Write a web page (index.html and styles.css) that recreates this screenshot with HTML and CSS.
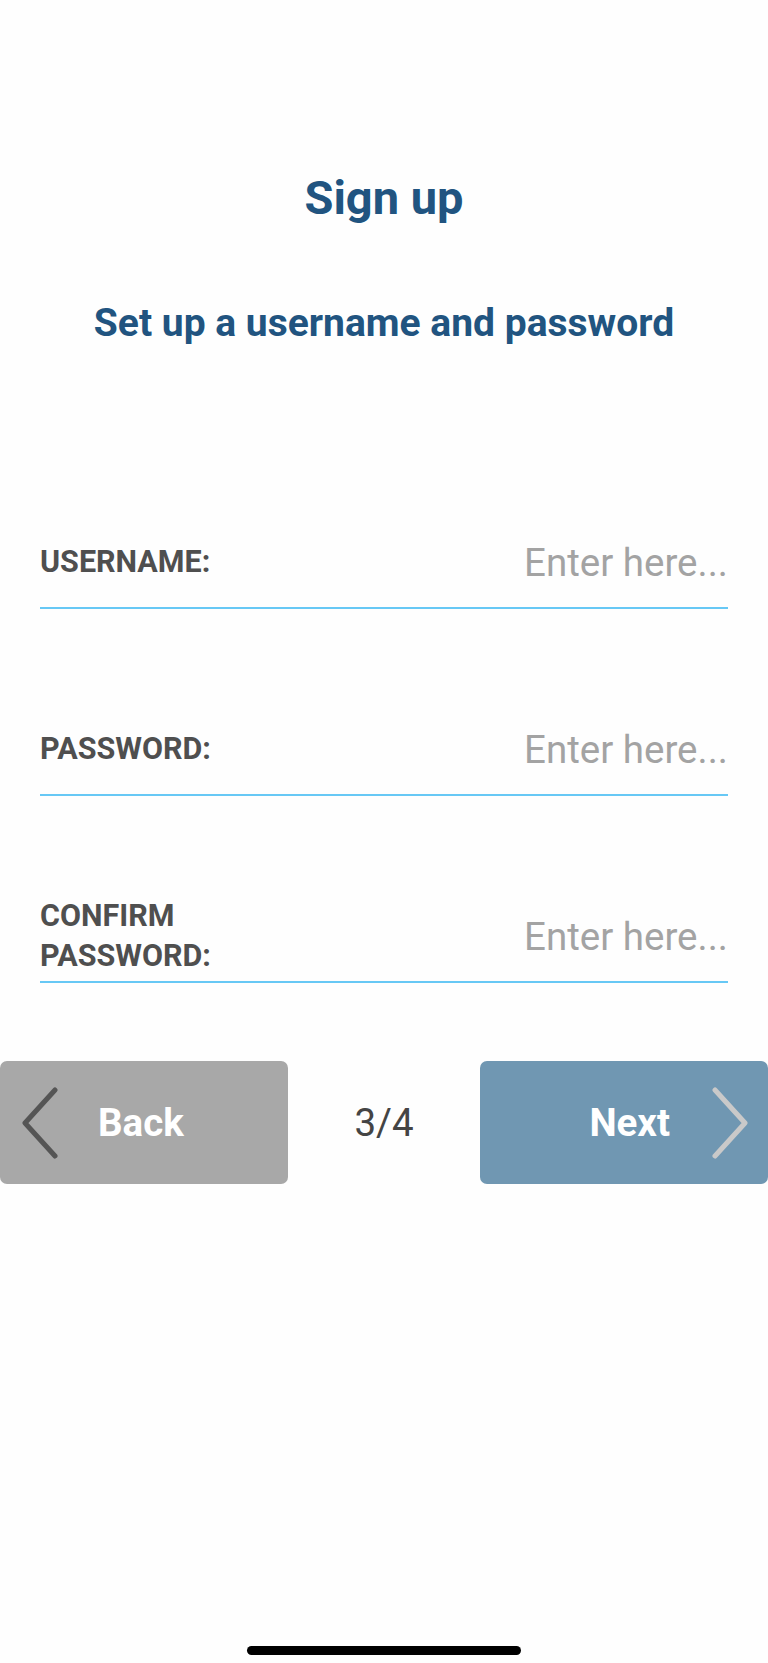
FILE: index.html
```html
<!DOCTYPE html>
<html lang="en">
<head>
    <meta charset="UTF-8">
    <meta name="viewport" content="width=device-width, initial-scale=1.0">
    <title>Sign up</title>
    <link rel="stylesheet" href="styles.css">
</head>
<body>
    <div class="page">
        <h1 class="title">Sign up</h1>
        <h2 class="subtitle">Set up a username and password</h2>

        <form class="signup-form">
            <div class="field-row">
                <label class="field-label" for="username">USERNAME:</label>
                <input class="field-input" id="username" type="text" placeholder="Enter here...">
            </div>
            <div class="field-row">
                <label class="field-label" for="password">PASSWORD:</label>
                <input class="field-input" id="password" type="password" placeholder="Enter here...">
            </div>
            <div class="field-row">
                <label class="field-label" for="confirm">CONFIRM<br>PASSWORD:</label>
                <input class="field-input" id="confirm" type="password" placeholder="Enter here...">
            </div>
        </form>

        <div class="nav-bar">
            <button class="nav-btn back-btn" type="button">
                <svg class="chevron" width="37" height="72" viewBox="0 0 37 72">
                    <polyline points="34,3 4,36 34,69" fill="none" stroke="#555555" stroke-width="5" stroke-linecap="round" stroke-linejoin="round"/>
                </svg>
                <span>Back</span>
            </button>
            <div class="step">3/4</div>
            <button class="nav-btn next-btn" type="button">
                <span>Next</span>
                <svg class="chevron" width="37" height="72" viewBox="0 0 37 72">
                    <polyline points="3,3 33,36 3,69" fill="none" stroke="#c9c9c9" stroke-width="5" stroke-linecap="round" stroke-linejoin="round"/>
                </svg>
            </button>
        </div>

        <div class="home-bar"></div>
    </div>
</body>
</html>
```

FILE: styles.css
```css
/* page */
body {
    margin: 0;
    padding: 0;
    background-color: #fefefe;
    font-family: Roboto, "Liberation Sans", sans-serif;
}
.page {
    min-height: 100vh;
    display: flex;
    flex-direction: column;
    padding-top: 168px;
    box-sizing: border-box;
}

/* headings */
.title {
    margin: 0;
    text-align: center;
    font-size: 47px;
    line-height: 59px;
    font-weight: 700;
    color: #215480;
}
.subtitle {
    margin: 73px 0 0;
    text-align: center;
    font-size: 39px;
    line-height: 46px;
    font-weight: 700;
    color: #215480;
}

/* form rows */
.signup-form {
    margin-top: 171px;
    padding: 0 40px;
    display: flex;
    flex-direction: column;
    gap: 95px;
}
.field-row {
    height: 90px;
    display: flex;
    align-items: center;
    justify-content: space-between;
    border-bottom: 2px solid #67c8f5;
}
.field-label {
    font-size: 30.5px;
    line-height: 40px;
    font-weight: 700;
    color: #4f4f4f;
}
.field-input {
    width: 300px;
    border: none;
    outline: none;
    padding: 0;
    background: transparent;
    text-align: right;
    font-family: Roboto, "Liberation Sans", sans-serif;
    font-size: 38.5px;
    color: #333;
}
.field-input::placeholder {
    color: #a3a3a3;
}

/* back / next */
.nav-bar {
    margin-top: 78px;
    display: flex;
    align-items: center;
    justify-content: space-between;
}
.nav-btn {
    width: 288px;
    height: 123px;
    border: none;
    border-radius: 7px;
    display: flex;
    align-items: center;
    color: #fff;
    font-family: Roboto, "Liberation Sans", sans-serif;
    font-size: 38.5px;
    font-weight: 700;
    cursor: pointer;
    padding: 0;
}
.back-btn {
    background-color: #a8a8a8;
    padding-left: 21px;
    gap: 40px;
}
.next-btn {
    background-color: #7097b2;
    justify-content: flex-end;
    padding-right: 19px;
    gap: 42px;
}
.step {
    font-size: 38.5px;
    color: #444;
}

/* iphone home indicator */
.home-bar {
    margin: auto auto 8px;
    width: 274px;
    height: 9px;
    border-radius: 5px;
    background-color: #000;
}
```
